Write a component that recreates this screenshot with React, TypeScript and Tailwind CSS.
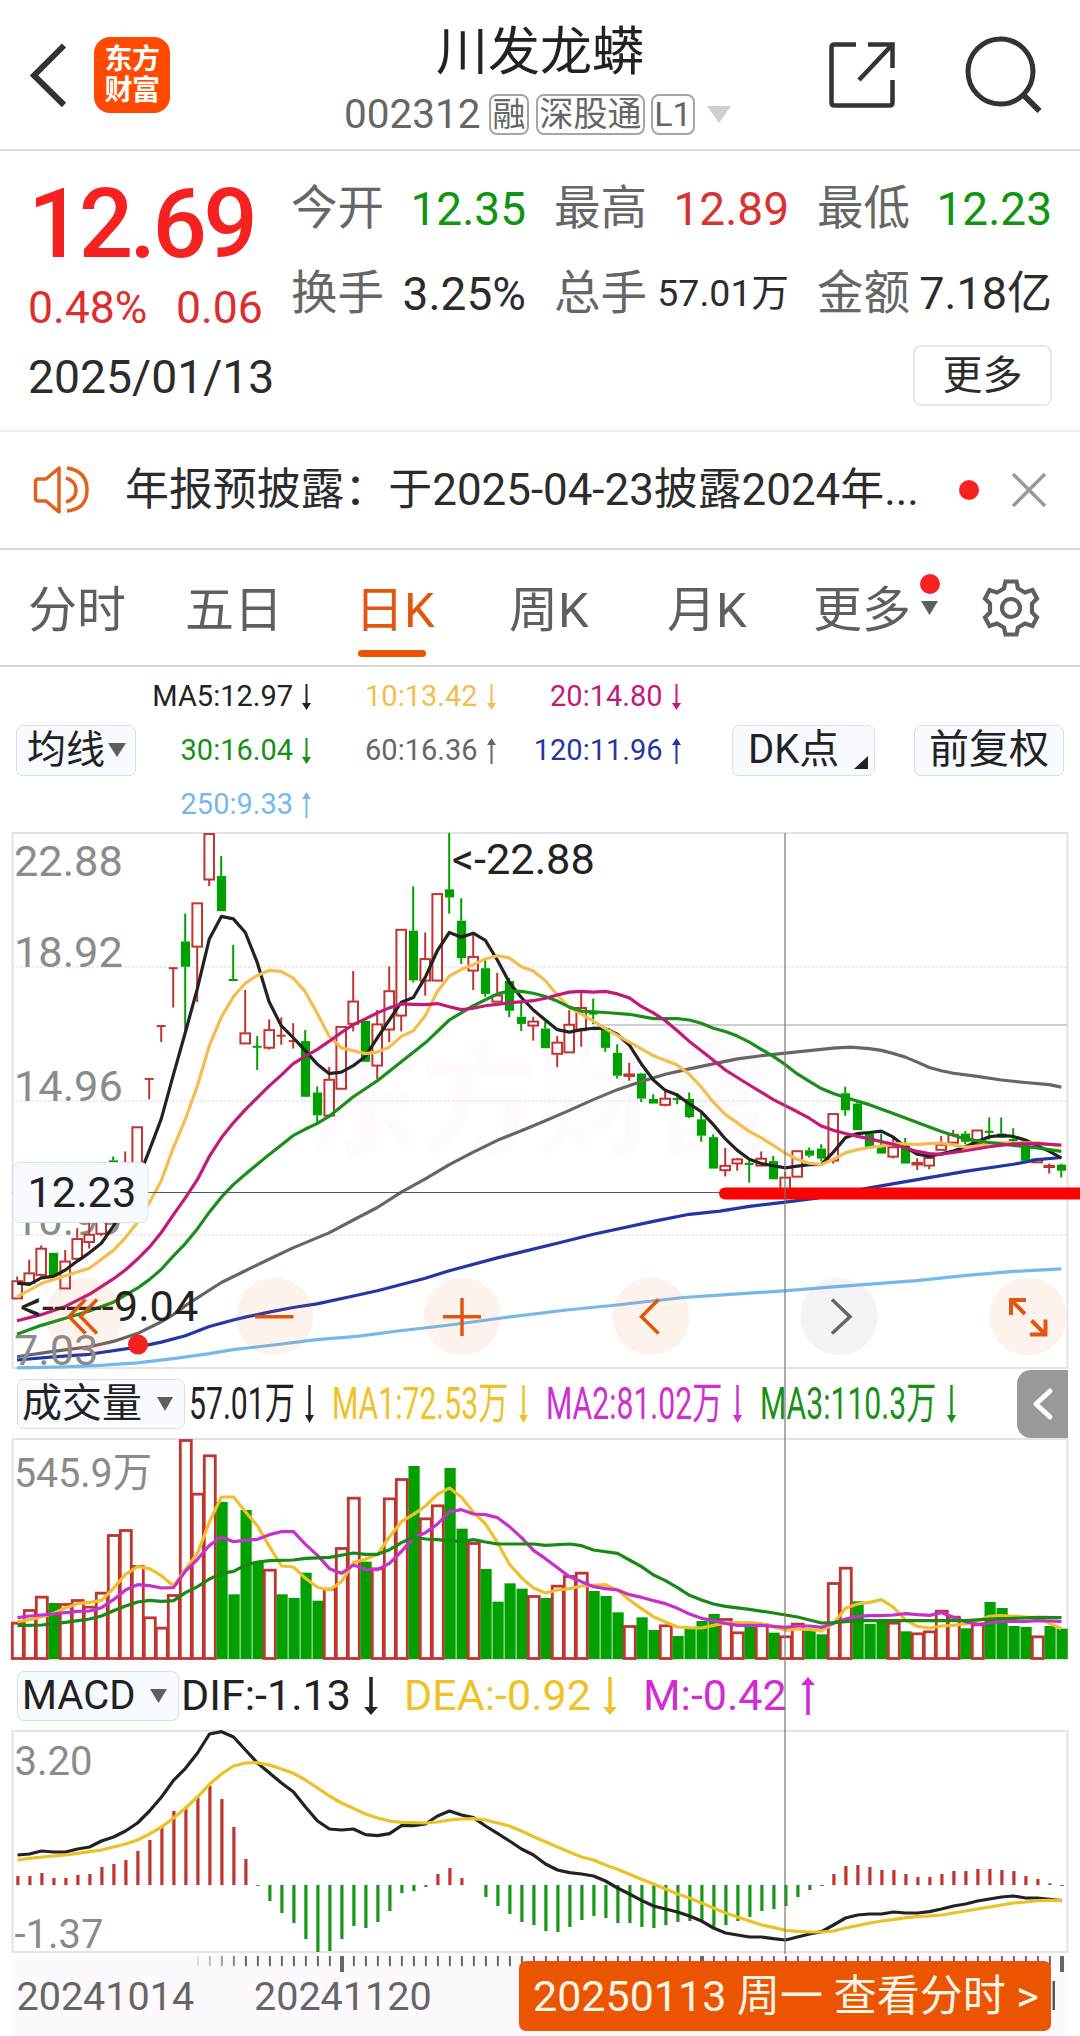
import React from "react";

const RED = "#c03530";
const GREEN = "#00a000";
const X0 = 17.5;
const STEP = 12;
const cx = (i: number) => X0 + STEP * i;

/* Daily candles in plot units (2.8 per pixel): high, open/close top, open/close bottom, low */
type Candle = ["r" | "g", number, number, number, number];
const candles: Candle[] = [
  ["r", 1278, 1290, 1341, 1341], ["r", 1231, 1268, 1298, 1304], ["r", 1191, 1199, 1275, 1278], ["g", 1212, 1212, 1278, 1290],
  ["r", 1204, 1235, 1313, 1313], ["r", 1143, 1172, 1230, 1232], ["r", 1120, 1160, 1183, 1200], ["r", 1110, 1120, 1160, 1165],
  ["g", 942, 953, 1060, 1060], ["r", 928, 990, 1040, 1060], ["r", 859, 859, 990, 1000], ["r", 725, 725, 725, 782],
  ["r", 577, 577, 577, 622], ["r", 415, 415, 415, 525], ["g", 262, 340, 411, 590], ["r", 232, 232, 356, 510],
  ["r", 38, 38, 168, 185], ["g", 101, 157, 255, 255], ["g", 350, 448, 448, 448], ["r", 476, 596, 627, 627],
  ["g", 605, 635, 635, 700], ["r", 558, 587, 639, 643], ["r", 553, 604, 604, 629], ["r", 569, 619, 619, 640],
  ["g", 588, 619, 775, 775], ["g", 746, 763, 827, 848], ["r", 692, 726, 829, 829], ["r", 578, 578, 754, 754],
  ["r", 423, 507, 572, 592], ["g", 562, 562, 677, 677], ["r", 532, 571, 689, 725], ["r", 410, 478, 588, 622],
  ["r", 306, 306, 549, 592], ["g", 186, 310, 449, 455], ["r", 315, 388, 451, 492], ["r", 206, 206, 451, 451],
  ["g", 36, 194, 217, 262], ["g", 219, 282, 387, 403], ["r", 322, 382, 423, 476], ["g", 390, 415, 487, 495],
  ["r", 428, 490, 510, 510], ["g", 442, 451, 534, 552], ["g", 512, 551, 571, 591], ["r", 551, 563, 577, 618],
  ["g", 565, 584, 639, 639], ["r", 605, 622, 656, 692], ["r", 532, 572, 652, 652], ["r", 483, 525, 590, 635],
  ["g", 500, 542, 542, 572], ["g", 582, 582, 638, 649], ["g", 628, 652, 716, 724], ["r", 680, 711, 718, 730],
  ["g", 708, 710, 780, 790], ["g", 768, 781, 794, 794], ["r", 760, 779, 799, 802], ["g", 765, 781, 781, 796],
  ["g", 763, 781, 832, 835], ["g", 820, 838, 884, 901], ["g", 880, 888, 976, 976], ["r", 918, 967, 982, 998],
  ["r", 946, 949, 963, 982], ["g", 954, 963, 963, 1015], ["r", 928, 947, 969, 969], ["g", 941, 955, 1006, 1006],
  ["r", 985, 1000, 1040, 1040], ["r", 926, 926, 1000, 1000], ["g", 917, 925, 940, 945], ["g", 908, 920, 948, 955],
  ["r", 822, 822, 955, 962], ["g", 747, 765, 813, 828], ["g", 787, 794, 868, 868], ["g", 878, 878, 918, 918],
  ["g", 878, 915, 934, 934], ["r", 888, 915, 944, 948], ["g", 890, 906, 962, 962], ["r", 947, 959, 966, 980],
  ["r", 935, 945, 969, 978], ["r", 885, 908, 925, 925], ["r", 868, 880, 905, 905], ["g", 871, 878, 901, 908],
  ["r", 868, 868, 908, 908], ["g", 833, 873, 873, 895], ["g", 833, 878, 890, 890], ["g", 863, 896, 896, 908],
  ["g", 893, 898, 954, 954], ["r", 946, 949, 960, 960], ["r", 962, 967, 973, 990], ["g", 962, 965, 982, 1001],
];

/* Moving averages: x in thirds of a pixel, y in plot units */
const averages: { color: string; pts: string }[] = [
  { color: "#75b9ec", pts: "51,1534 196,1531 300,1527 412,1520 520,1508 628,1494 700,1483 820,1470 951,1455 1070,1446 1200,1430 1350,1414 1500,1395 1700,1372 1850,1358 2050,1337 2180,1329 2360,1318 2500,1307 2750,1290 2900,1275 3040,1264 3184,1257" },
  { color: "#2236a5", pts: "51,1512 160,1503 268,1496 412,1476 484,1462 556,1444 628,1418 700,1400 736,1392 807,1378 879,1365 951,1355 1050,1335 1132,1318 1276,1283 1348,1262 1492,1226 1672,1185 1780,1160 1960,1124 2068,1104 2160,1095 2248,1082 2356,1070 2450,1059 2608,1030 2752,1007 2900,983 3040,964 3112,951 3184,945" },
  { color: "#666666", pts: "51,1503 160,1488 268,1475 340,1460 412,1438 484,1405 520,1385 556,1360 592,1338 664,1295 736,1262 807,1230 879,1198 987,1156 1060,1120 1132,1085 1204,1042 1276,1005 1348,965 1420,930 1492,897 1564,870 1636,842 1708,813 1780,783 1852,755 1924,732 1996,712 2068,697 2140,683 2212,669 2284,660 2356,653 2428,646 2500,639 2550,636 2608,640 2644,645 2680,654 2716,664 2752,678 2788,693 2824,702 2860,709 2932,718 3004,728 3076,735 3148,741 3184,748" },
  { color: "#222222", pts: "51,1297 88,1300 124,1282 160,1278 196,1260 232,1235 268,1212 304,1185 340,1137 376,1080 412,1010 448,925 484,836 519,717 556,595 592,472 628,333 664,270 700,277 736,315 771,397 807,508 843,575 879,609 915,645 951,683 987,710 1024,706 1060,688 1096,662 1132,610 1168,560 1204,510 1240,497 1276,440 1312,366 1348,315 1384,328 1420,317 1456,337 1492,392 1528,455 1564,497 1600,532 1636,560 1672,587 1708,594 1744,587 1780,583 1816,584 1852,600 1888,630 1924,683 1960,728 1996,757 2032,770 2068,795 2104,817 2140,853 2176,893 2212,925 2248,950 2284,962 2320,968 2356,974 2392,969 2428,965 2464,964 2500,930 2536,890 2572,878 2608,875 2644,871 2680,888 2716,915 2752,936 2788,941 2824,935 2860,927 2896,915 2932,900 2968,887 3004,883 3040,886 3076,896 3112,912 3148,928 3184,946" },
  { color: "#f5bd4e", pts: "51,1335 124,1298 196,1276 268,1255 340,1205 376,1170 412,1127 448,1072 484,1010 519,920 556,838 592,745 628,632 664,552 700,495 736,457 771,436 807,421 843,424 879,442 915,480 951,540 987,605 1024,638 1060,646 1096,654 1132,650 1168,636 1204,606 1240,590 1276,548 1312,480 1348,437 1384,418 1420,405 1456,389 1492,380 1528,386 1564,411 1600,423 1636,450 1672,490 1708,525 1744,543 1780,563 1816,584 1852,603 1888,622 1960,660 2032,686 2068,712 2104,748 2140,790 2176,825 2212,848 2248,872 2284,890 2320,911 2356,933 2392,950 2428,961 2464,965 2500,950 2536,932 2572,923 2608,917 2644,913 2680,906 2752,908 2824,904 2896,916 2932,914 2968,905 3004,904 3112,904 3184,913" },
  { color: "#189018", pts: "51,1440 124,1415 196,1395 268,1375 340,1350 412,1311 448,1287 484,1258 519,1222 556,1186 592,1145 628,1098 664,1056 700,1021 736,992 807,937 879,884 915,866 951,850 987,830 1024,802 1060,775 1132,730 1204,677 1276,624 1348,560 1420,520 1492,487 1528,479 1564,480 1600,485 1636,494 1672,507 1708,524 1744,535 1816,539 1888,544 1960,556 2032,556 2068,560 2104,569 2140,583 2176,592 2212,605 2248,622 2284,642 2320,662 2356,685 2392,711 2428,732 2464,752 2500,766 2536,777 2608,797 2680,822 2752,847 2824,872 2896,893 2968,903 3040,911 3112,918 3184,928" },
  { color: "#c21a78", pts: "51,1402 124,1385 196,1362 268,1328 340,1285 376,1260 412,1230 448,1196 484,1155 519,1107 556,1058 592,1007 628,942 664,890 700,848 736,811 807,745 843,715 879,683 915,662 951,643 987,620 1024,595 1060,573 1096,557 1132,540 1168,526 1204,515 1240,516 1276,517 1312,514 1348,523 1384,531 1420,527 1456,520 1528,512 1600,506 1636,499 1672,490 1708,482 1744,480 1780,482 1816,480 1852,487 1888,498 1924,522 1960,540 1996,562 2032,590 2068,620 2104,646 2140,673 2176,700 2248,742 2320,783 2392,817 2428,835 2464,857 2500,869 2536,878 2608,893 2680,908 2752,928 2788,934 2824,936 2896,926 2968,915 3040,907 3112,906 3184,910" },
];

/* Volume bar tops, three units per pixel */
const volume =
  "788r 750r 710r 729g 732r 720r 740r 698r 525r 510r 618r 772r 803r 705r 240r 401r 286r 426g 703g 450g 605g 629r 703g 714g 638g 722g 686r 564r 413r 605g 625r 415r 357r 318g 475r 436r 324g 506g 549r 627g 725g 670g 686g 708r 714g 677r 648r 638r 693g 708g 757g 798r 772g 810g 796r 828g 805g 783g 762g 777r 817r 795g 793r 818g 829r 791r 812g 823g 669r 623r 724g 792g 785g 788r 814g 820r 814r 752r 770r 805g 793r 726g 744g 798g 801g 829r 798g 806g".split(" ");
const volYellow = [785,779,771,760,744,731,727,721,685,643,620,626,647,678,628,580,485,411,411,455,498,560,618,621,655,682,690,665,607,598,583,530,485,463,438,403,384,412,457,492,548,613,653,684,699,690,686,678,676,674,690,720,746,770,786,801,803,804,796,789,788,788,791,800,811,807,808,813,790,745,732,727,719,742,780,799,804,798,796,792,783,769,767,769,771,774,790,806];
const volPurple = [773,768,765,762,758,754,753,743,719,690,674,677,684,683,633,598,556,531,545,541,538,524,515,515,553,586,626,640,615,628,629,610,574,533,518,492,455,449,462,464,473,500,533,571,596,623,650,665,680,686,690,704,712,722,731,745,762,775,782,790,796,796,796,799,802,798,798,802,790,777,769,767,767,765,761,764,766,758,772,785,793,789,784,784,784,782,783,785];
const volGreen: [number, number][] = [[0,797],[2,795],[4,787],[6,777],[7,768],[8,752],[9,738],[10,726],[11,721],[12,724],[13,722],[14,698],[15,680],[16,657],[17,640],[18,634],[19,615],[20,606],[21,602],[23,600],[24,595],[26,592],[28,579],[29,583],[30,583],[31,569],[32,548],[33,531],[34,537],[35,539],[37,545],[38,539],[39,546],[40,552],[43,552],[44,556],[46,552],[47,557],[48,570],[50,580],[51,600],[52,620],[53,645],[54,662],[55,683],[56,706],[57,720],[58,732],[59,739],[61,748],[63,759],[65,771],[66,780],[67,789],[68,788],[69,785],[70,781],[72,782],[79,782],[81,777],[83,775],[85,772],[87,773]];

/* MACD histogram ends and lines, three units per pixel; zero is 675 */
const macd = [648,648,639,654,654,645,642,621,612,600,573,540,500,453,441,413,377,417,501,597,678,723,759,789,837,876,873,837,798,804,786,753,699,693,681,642,624,654,675,711,738,762,786,795,813,816,801,780,768,774,789,789,801,804,795,786,783,785,800,795,783,771,753,747,738,711,690,678,642,618,615,621,630,630,642,651,651,642,633,633,627,627,630,633,648,657,670,678];
const dif = [585,582,573,576,576,567,561,543,531,513,489,453,411,361,325,279,222,215,231,270,309,339,369,396,441,483,507,510,507,524,527,521,497,497,492,468,453,465,473,498,520,543,567,585,612,630,638,642,648,663,684,702,721,738,747,756,768,783,804,819,825,831,831,836,840,831,822,815,795,774,765,762,762,756,759,759,755,747,738,732,723,717,711,708,714,714,718,722];
const dea = [600,595,591,588,585,580,575,570,561,552,540,522,501,474,444,411,373,342,318,309,308,315,327,340,360,384,408,429,445,462,474,483,487,488,489,486,480,477,476,480,489,498,513,530,545,561,576,591,600,615,628,643,658,672,687,702,714,729,744,759,771,783,795,802,811,814,816,816,813,804,797,789,783,779,773,770,768,765,759,753,747,741,735,729,726,722,721,721];

const line = (vals: number[], off: number) => vals.map((v, i) => `${cx(i)},${v / 3 - off}`).join(" ");

const ARROWS = {
  sm: { w: 9, h: 26, s: 2, a: 7 },
  tall: { w: 9, h: 38, s: 2.4, a: 8 },
  lg: { w: 14, h: 38, s: 3.5, a: 8 },
};

function Arrow({ up = false, size = "sm", className = "" }: { up?: boolean; size?: "sm" | "tall" | "lg"; className?: string }) {
  const { w, h, s, a } = ARROWS[size];
  return (
    <svg width={w} height={h} viewBox={`0 0 ${w} ${h}`} className={`shrink-0 ${className}`}>
      <g transform={up ? `rotate(180 ${w / 2} ${h / 2})` : undefined} fill="currentColor">
        <rect x={w / 2 - s / 2} y="0" width={s} height={h - a + 1} />
        <path d={`M0 ${h - a}H${w}L${w / 2} ${h}Z`} />
      </g>
    </svg>
  );
}

const Down = ({ w, h, className = "" }: { w: number; h: number; className?: string }) => (
  <svg width={w} height={h} viewBox={`0 0 ${w} ${h}`} className={`shrink-0 ${className}`}>
    <path d={`M0 0H${w}L${w / 2} ${h}Z`} fill="currentColor" />
  </svg>
);

function Header() {
  return (
    <header className="flex h-[151px] items-start border-b-2 border-[#dadada] text-[#333]">
      <svg width="40" height="68" viewBox="0 0 40 68" className="mt-[41px] ml-[28px] shrink-0" fill="none" stroke="currentColor" strokeWidth="6">
        <path d="M36 4.500L6 34.500L36 64" />
      </svg>
      <div className="mt-[37px] ml-[26px] flex size-[76px] shrink-0 flex-col items-center justify-center rounded-[16px] bg-[#ff4a00] text-[28px] leading-[31px] font-bold text-white">
        <span className="tracking-[-0.5px]">东方</span>
        <span className="tracking-[-0.5px]">财富</span>
      </div>
      <div className="flex w-[656px] shrink-0 flex-col pl-[176px]">
        <h1 className="mt-[27px] w-[388px] text-center text-[52px] leading-[52px] text-[#222]">川发龙蟒</h1>
        <div className="mt-[13px] flex h-[44px] items-center text-[#666]">
          <span className="-ml-[2px] w-[145px] shrink-0 text-[40.500px] leading-none">002312</span>
          <span className="flex h-[41px] w-[40px] shrink-0 items-center justify-center rounded-[8px] border-2 border-[#a5a5a5] text-[33px] leading-none">融</span>
          <span className="ml-[7px] flex h-[41px] w-[109px] shrink-0 items-center justify-center rounded-[8px] border-2 border-[#a5a5a5] text-[34px] leading-none">深股通</span>
          <span className="ml-[6px] flex h-[41px] w-[44px] shrink-0 items-center justify-center rounded-[8px] border-2 border-[#a5a5a5] text-[34px] leading-none">L1</span>
          <Down w={24} h={17} className="ml-[12px] text-[#cfcfcf]" />
        </div>
      </div>
      <svg width="70" height="70" viewBox="0 0 70 70" className="mt-[40px] ml-[1px] shrink-0" fill="none" stroke="currentColor" strokeWidth="4.500">
        <path d="M29 4.500H7.500Q4.500 4.500 4.500 7.500V62.500Q4.500 65.500 7.500 65.500H62.500Q65.500 65.500 65.500 62.500V40M41 4.500H65.500V28M65 5L32 40" />
      </svg>
      <svg width="82" height="80" viewBox="0 0 82 80" className="mt-[35px] ml-[66px] shrink-0" fill="none" stroke="currentColor" strokeWidth="5">
        <circle cx="37.500" cy="36.500" r="32.500" />
        <path d="M59.500 59L76.500 76" strokeWidth="6" />
      </svg>
    </header>
  );
}

function Stat({ label, value, tone, size = "text-[46px]" }: { label: string; value: string; tone: string; size?: string }) {
  return (
    <div className="flex h-[83px] w-[235px] items-center justify-between text-[#666]">
      <span className="text-[46.500px] leading-none">{label}</span>
      <span className={`${size} ${tone} leading-none`}>{value}</span>
    </div>
  );
}

function Quote() {
  return (
    <section className="h-[281px] border-b-2 border-[#eeeeee]">
      <div className="flex h-[189px]">
        <div className="w-[291px] pl-[28px]">
          <div className="mt-[25px] text-[96px] leading-[96px] font-medium tracking-[-3.800px] text-[#f62222]">12.69</div>
          <div className="mt-[14px] flex text-[44.500px] leading-none text-[#dd2e2e]">
            <span className="w-[148px]">0.48%</span>
            <span>0.06</span>
          </div>
        </div>
        <div className="mt-[16px] grid h-[168px] grid-cols-[235px_235px_235px] grid-rows-[85px_83px] gap-x-[28px]">
          <Stat label="今开" value="12.35" tone="text-[#0f950f]" />
          <Stat label="最高" value="12.89" tone="text-[#d63333]" />
          <Stat label="最低" value="12.23" tone="text-[#0f950f]" />
          <Stat label="换手" value="3.25%" tone="text-[#2c2c2c]" size="text-[46px]" />
          <Stat label="总手" value="57.01万" tone="text-[#2c2c2c]" size="text-[37.500px]" />
          <Stat label="金额" value="7.18亿" tone="text-[#2c2c2c]" size="text-[45px]" />
        </div>
      </div>
      <div className="flex items-start justify-between pr-[28px] pl-[28px]">
        <span className="mt-[14px] text-[46.300px] leading-none text-[#2c2c2c]">2025/01/13</span>
        <button className="mt-[5px] flex h-[61px] w-[139px] items-center justify-center rounded-[8px] border-2 border-[#e9e7ea] text-[40px] leading-none text-[#2c2c2c]">更多</button>
      </div>
    </section>
  );
}

function Notice() {
  return (
    <section className="flex h-[118px] items-center border-b-2 border-[#d8d8d8]">
      <svg width="60" height="52" viewBox="0 0 60 52" className="ml-[32px] shrink-0" fill="none" stroke="#e0621c" strokeWidth="3.500" strokeLinejoin="round">
        <path d="M27 4V48L14 37H6Q3.500 37 3.500 34V18Q3.500 15 6 15H14Z" />
        <path d="M34 14Q44 17 44 26T34 38" />
        <path d="M35 4Q55 7 55 26T35 47" />
      </svg>
      <p className="mt-[2px] ml-[33px] w-[834px] shrink-0 text-[43.900px] leading-none whitespace-nowrap text-[#2c2c2c]">年报预披露：于2025-04-23披露2024年...</p>
      <span className="size-[20px] shrink-0 rounded-full bg-[#f82222]" />
      <svg width="36" height="36" viewBox="0 0 36 36" className="ml-[32px] shrink-0" stroke="#999" strokeWidth="3.500">
        <path d="M2 2L34 34M34 2L2 34" />
      </svg>
    </section>
  );
}

function Tabs() {
  const tabs = [
    { t: "分时", w: "w-[157px]" },
    { t: "五日", w: "w-[170px]" },
    { t: "日K", w: "w-[154px]", on: true },
    { t: "周K", w: "w-[158px]" },
    { t: "月K", w: "w-[146px]" },
  ];
  return (
    <nav className="flex h-[117px] items-center border-b-2 border-[#d8d8d8] pl-[28px] text-[49px] leading-none text-[#5f5f5f]">
      {tabs.map((x) => (
        <div key={x.t} className={`relative shrink-0 pt-[6px] ${x.w} ${x.on ? "text-[#e2560f]" : ""}`}>
          {x.t}
          {x.on && <span className="absolute top-[70px] left-[3px] h-[7px] w-[68px] rounded-full bg-[#ea5504]" />}
        </div>
      ))}
      <div className="relative flex w-[167px] shrink-0 items-center pt-[6px]">
        更多
        <Down w={17} h={14} className="-mt-[5px] ml-[10px]" />
        <span className="absolute -top-[6px] left-[107px] size-[20px] rounded-full bg-[#f82222]" />
      </div>
      <svg width="62" height="62" viewBox="-31 -31 62 62" className="shrink-0" fill="none" stroke="currentColor" strokeWidth="4.200">
        <path d="M-5.500 -26.500H5.500L7 -19.500L14 -15.500L21.500 -18L26 -9.500L21 -4.500V4.500L26 9.500L21.500 18L14 15.500L7 19.500L5.500 26.500H-5.500L-7 19.500L-14 15.500L-21.500 18L-26 9.500L-21 4.500V-4.500L-26 -9.500L-21.500 -18L-14 -15.500L-7 -19.500Z" />
        <circle cx="0" cy="0" r="9" />
      </svg>
    </nav>
  );
}

function Legend() {
  const items = [
    ["MA5:12.97", false, "text-[#222]"],
    ["10:13.42", false, "text-[#f5bd4e]"],
    ["20:14.80", false, "text-[#c21a78]"],
    ["30:16.04", false, "text-[#189018]"],
    ["60:16.36", true, "text-[#666]"],
    ["120:11.96", true, "text-[#2236a5]"],
    ["250:9.33", true, "text-[#75b9ec]"],
  ] as const;
  const box = "flex h-[51px] shrink-0 items-center rounded-[7px] border border-[#dcdfe6] bg-[#f7faff] leading-none text-[#222]";
  return (
    <section className="flex h-[166px] items-center">
      <div className={`${box} ml-[16px] w-[120px] pl-[10px] text-[39px]`}>
        均线
        <Down w={18} h={14} className="ml-[3px] text-[#5f5f5f]" />
      </div>
      <div className="mt-px ml-[8px] grid h-[162px] w-[549px] grid-cols-[167px_184.500px_185px] grid-rows-3 text-[29px] leading-none">
        {items.map(([t, up, c]) => (
          <div key={t} className={`flex items-center justify-end ${c}`}>
            {t}
            <Arrow up={up} className="ml-[9px]" />
          </div>
        ))}
      </div>
      <div className={`${box} relative ml-[39px] w-[143px] pl-[15px] text-[40px]`}>
        DK点
        <svg width="14" height="13" viewBox="0 0 14 13" className="absolute right-[6px] bottom-[6px]"><path d="M14 0V13H0Z" fill="#222" /></svg>
      </div>
      <div className={`${box} ml-[39px] w-[150px] justify-center text-[40px]`}>前复权</div>
    </section>
  );
}

const chartFont = { fontFamily: 'Roboto, "Noto Sans CJK SC", sans-serif' };

function PriceChart() {
  /* Panel spans page rows 833 to 1368; plot unit 36 is its top edge. */
  const y = (v: number) => v / 2.8 - 13;
  const toPixels = (v: string) => v.split(" ").map((p) => { const [a, b] = p.split(",").map(Number); return `${a / 3},${y(b)}`; }).join(" ");
  const orange = "#e0560f";
  return (
    <svg width="1080" height="535" viewBox="0 0 1080 535" className="block overflow-visible" style={chartFont} fontSize="43.300">
      <text x="303" y="312" textLength="470" lengthAdjust="spacingAndGlyphs" fontSize="120" fontWeight="700" fill="#fefaff">东方财富</text>
      <g stroke="#e0e0e0" strokeWidth="1.500" strokeDasharray="2 2">
        <path d="M12.500 134H1068M12.500 268H1068M12.500 402H1068" />
      </g>
      <rect x="12.500" y="0" width="1055" height="535" fill="none" stroke="#e2e2e2" strokeWidth="1.800" />
      <path d="M597 192H1067" stroke="#cfcfd3" strokeWidth="2" />
      <g fill="#8b8b8b">
        <text x="14" y="42.500">22.88</text>
        <text x="14" y="133.500">18.92</text>
        <text x="14" y="267.500">14.96</text>
        <text x="14" y="401.500">10.99</text>
      </g>
      {candles.map(([c, h, t, b, l], i) => {
        const x = cx(i) - 0.3;
        const col = c === "r" ? RED : GREEN;
        const flat = b - t < 3;
        return (
          <g key={i} stroke={col} strokeWidth="2">
            {h < t && <path d={`M${x} ${y(h)}V${y(t)}`} />}
            {l > b && <path d={`M${x} ${y(b)}V${y(l)}`} />}
            {flat ? <path d={`M${x - 4.5} ${y(t)}h9`} /> : c === "r"
              ? <rect x={x - 4.8} y={y(t) + 0.5} width="9.600" height={y(b) - y(t) - 1} fill={b - t < 9 ? col : "none"} />
              : <rect x={x - 4.3} y={y(t)} width="9.200" height={y(b) - y(t)} fill={col} strokeWidth="0" />}
          </g>
        );
      })}
      {averages.map((a) => <polyline key={a.color} points={toPixels(a.pts)} fill="none" stroke={a.color} strokeWidth="3.200" strokeLinejoin="round" />)}
      <path d="M12.500 359.500H1067" stroke="#555" strokeWidth="1.100" />
      <text x="452" y="40.500" fill="#222">&lt;-22.88</text>
      <text x="20" y="487.500" fill="#222">&lt;------9.04</text>
      <text x="14" y="531.500" fill="#8b8b8b">7.03</text>
      <g>
        {[84, 274.7, 462, 651, 839, 1028].map((x, i) => (
          <circle key={x} cx={x} cy="483.500" r="38.800" fill={i === 4 ? "#8f7f9c" : "#f56a3c"} fillOpacity={0.09} />
        ))}
      </g>
      <g fill="none" stroke={orange} strokeWidth="3.500">
        <path d="M85.500 466.500L69 483.500L85.500 500.500M97 466.500L80.500 483.500L97 500.500" />
        <path d="M255 483.800H293.500M443 483.800H481M462 465V503" />
        <path d="M658.500 466.500L641.500 483.800L658.500 500.500" />
        <path d="M832 466.500L850 483.800L832 500.500" stroke="#666" />
        <path d="M1026 467H1011V482M1011 467L1025 481M1030 501.500H1045.500V486.500M1045.500 501.500L1031.500 487.500" strokeWidth="4" />
      </g>
      <circle cx="138" cy="511.600" r="10" fill="#f62222" />
      <rect x="13" y="329.500" width="135" height="60" rx="7" fill="#f7faff" stroke="#dfe1e6" strokeWidth="1" />
      <text x="27.500" y="373.500" fill="#222">12.23</text>
      <path d="M725 360.500H1090" stroke="#fe0000" strokeWidth="12" strokeLinecap="round" />
    </svg>
  );
}

/* Legend values in the volume row are set in a condensed width. */
function Narrow({ t, w, tone }: { t: string; w: string; tone: string }) {
  return (
    <span className={`flex shrink-0 items-center ${w} ${tone}`}>
      <span className="w-0 grow whitespace-nowrap">
        <span className="inline-block origin-left scale-x-[0.685] text-[44px] leading-none">{t}</span>
      </span>
      <Arrow size="tall" />
    </span>
  );
}

const headBox = "flex h-[50px] shrink-0 items-center rounded-[7px] border border-[#dcdfe6] bg-[#f7faff] leading-none text-[#222]";

function VolumePanel() {
  return (
    <section>
      <div className="flex h-[71px] items-center">
        <div className={`${headBox} ml-[17px] w-[168px] pl-[4px] text-[40px]`}>
          成交量
          <Down w={16} h={14} className="ml-[15px] text-[#5f5f5f]" />
        </div>
        <Narrow t="57.01万" w="w-[125px] ml-[4px]" tone="text-[#222]" />
        <Narrow t="MA1:72.53万" w="w-[196px] ml-[18px]" tone="text-[#f0c228]" />
        <Narrow t="MA2:81.02万" w="w-[196px] ml-[18px]" tone="text-[#cf2fd0]" />
        <Narrow t="MA3:110.3万" w="w-[196px] ml-[18px]" tone="text-[#189018]" />
        <div className="ml-[61px] flex h-[68px] w-[51px] items-center justify-center rounded-l-[14px] bg-[#9b989b]">
          <svg width="22" height="34" viewBox="0 0 22 34" fill="none" stroke="#fff" strokeWidth="5" strokeLinecap="round" strokeLinejoin="round"><path d="M18 4L4 17L18 30" /></svg>
        </div>
      </div>
      <svg width="1080" height="220" viewBox="0 0 1080 220" className="block overflow-visible" style={chartFont}>
        <rect x="12.500" y="0" width="1055" height="220" fill="none" stroke="#e2e2e2" strokeWidth="1.800" />
        <text x="14" y="48" fontSize="41" textLength="138" lengthAdjust="spacingAndGlyphs" fill="#8b8b8b">545.9万</text>
        {volume.map((s, i) => {
          const top = parseInt(s) / 3 - 79;
          return s.endsWith("r")
            ? <rect key={i} x={cx(i) - 5.2} y={top + 0.5} width="11" height={219 - top} fill="#fff" stroke={RED} strokeWidth="2.800" />
            : <rect key={i} x={cx(i) - 5} y={top} width="11.200" height={220 - top} fill={GREEN} />;
        })}
        <g fill="none" strokeWidth="3.200" strokeLinejoin="round">
          <polyline points={line(volYellow, 79)} stroke="#efc02c" />
          <polyline points={line(volPurple, 79)} stroke="#c631cc" />
          <polyline points={volGreen.map(([i, v]) => `${cx(i)},${v / 3 - 79}`).join(" ")} stroke="#188a14" />
        </g>
      </svg>
    </section>
  );
}

function MacdPanel() {
  return (
    <section>
      <div className="flex h-[72px] items-center pt-[1px] text-[43px] leading-none">
        <div className={`${headBox} ml-[17px] w-[162px] pl-[4px] text-[40px]`}>
          MACD
          <Down w={17} h={14} className="ml-[15px] text-[#5f5f5f]" />
        </div>
        <span className="ml-[2px] flex w-[197px] shrink-0 items-center justify-between text-[#222]">DIF:-1.13<Arrow size="lg" /></span>
        <span className="ml-[26px] flex w-[213px] shrink-0 items-center justify-between text-[#f0c228]">DEA:-0.92<Arrow size="lg" /></span>
        <span className="ml-[26px] flex w-[172px] shrink-0 items-center justify-between text-[#d12bd4]">M:-0.42<Arrow size="lg" up /></span>
      </div>
      <svg width="1080" height="221" viewBox="0 0 1080 221" className="block overflow-visible" style={chartFont} fontSize="40">
        <rect x="12.500" y="0" width="1055" height="221" fill="none" stroke="#e2e2e2" strokeWidth="1.800" />
        <g fill="#8b8b8b">
          <text x="14.500" y="44">3.20</text>
          <text x="14.500" y="217">-1.37</text>
        </g>
        {macd.map((v, i) => {
          const e = v / 3 - 71;
          return <rect key={i} x={cx(i) - 1.2} y={Math.min(154, e)} width="3.200" height={Math.abs(154 - e)} fill={e < 154 ? RED : "#189818"} />;
        })}
        <g fill="none" strokeWidth="3.200" strokeLinejoin="round">
          <polyline points={line(dif, 71)} stroke="#222" />
          <polyline points={line(dea, 71)} stroke="#ecc126" />
        </g>
      </svg>
    </section>
  );
}

function DateAxis() {
  return (
    <section className="relative h-[84px]">
      <svg width="1080" height="84" viewBox="0 0 1080 84" className="block" style={chartFont} fontSize="39.500">
        <rect x="12" y="2" width="1056" height="82" fill="#fdf9fe" />
        {Array.from({ length: 73 }, (_, k) => k + 15).map((i) => {
          const major = i === 27 || i === 57 || i === 87;
          return <rect key={i} x={cx(i) - (major ? 1.5 : 0.6)} y="4" width={major ? 4 : 2} height={major ? 16 : 10} fill="#666" opacity={i < 19 ? (i - 14) * 0.2 : 1} />;
        })}
        <g fill="#666">
          <text x="16.500" y="58">20241014</text>
          <text x="254" y="58">20241120</text>
        </g>
        <rect x="1052.500" y="29" width="2.500" height="29" fill="#555" />
      </svg>
      <button className="absolute top-[9px] left-[519px] flex h-[70px] w-[532px] items-center rounded-[7px] bg-[#eb5500] pl-[14px] text-[43px] leading-none whitespace-nowrap text-[#fff6ea]">
        20250113 周一 查看分时 &gt;
      </button>
    </section>
  );
}

export default function App() {
  return (
    <main className="h-[2036px] w-[1080px] overflow-hidden bg-white font-[Roboto,'Noto_Sans_CJK_SC',sans-serif]" lang="zh-CN">
      <Header />
      <Quote />
      <Notice />
      <Tabs />
      <Legend />
      <div className="relative">
        <PriceChart />
        <VolumePanel />
        <MacdPanel />
        <span className="absolute top-0 left-[784px] h-[1128px] w-[2px] bg-[#777]/60" />
        <DateAxis />
      </div>
    </main>
  );
}
